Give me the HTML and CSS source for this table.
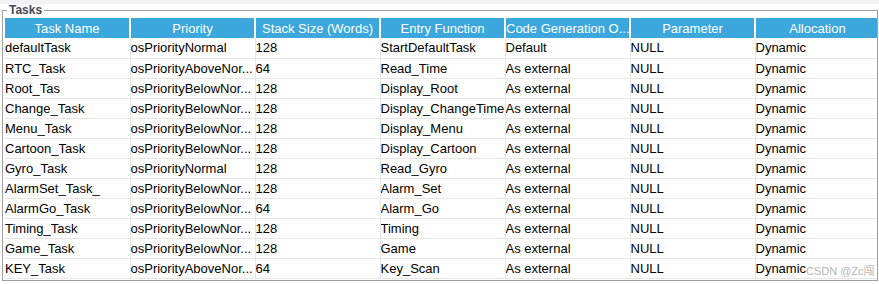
FILE: index.html
```html
<!DOCTYPE html>
<html lang="en">
<head>
    <meta charset="UTF-8">
    <title>Tasks</title>
    <link rel="stylesheet" href="styles.css">
</head>
<body>
    <div class="topbar"></div>
    <fieldset class="tasks">
        <legend>Tasks</legend>
        <div class="grid-wrap">
            <table class="grid">
                <thead>
                    <tr>
                        <th>Task Name</th>
                        <th>Priority</th>
                        <th>Stack Size (Words)</th>
                        <th>Entry Function</th>
                        <th class="left">Code Generation O...</th>
                        <th>Parameter</th>
                        <th>Allocation</th>
                    </tr>
                </thead>
                <tbody>
                    <tr><td>defaultTask</td><td>osPriorityNormal</td><td>128</td><td>StartDefaultTask</td><td>Default</td><td>NULL</td><td>Dynamic</td></tr>
                    <tr><td>RTC_Task</td><td>osPriorityAboveNor...</td><td>64</td><td>Read_Time</td><td>As external</td><td>NULL</td><td>Dynamic</td></tr>
                    <tr><td>Root_Tas</td><td>osPriorityBelowNor...</td><td>128</td><td>Display_Root</td><td>As external</td><td>NULL</td><td>Dynamic</td></tr>
                    <tr><td>Change_Task</td><td>osPriorityBelowNor...</td><td>128</td><td>Display_ChangeTime</td><td>As external</td><td>NULL</td><td>Dynamic</td></tr>
                    <tr><td>Menu_Task</td><td>osPriorityBelowNor...</td><td>128</td><td>Display_Menu</td><td>As external</td><td>NULL</td><td>Dynamic</td></tr>
                    <tr><td>Cartoon_Task</td><td>osPriorityBelowNor...</td><td>128</td><td>Display_Cartoon</td><td>As external</td><td>NULL</td><td>Dynamic</td></tr>
                    <tr><td>Gyro_Task</td><td>osPriorityNormal</td><td>128</td><td>Read_Gyro</td><td>As external</td><td>NULL</td><td>Dynamic</td></tr>
                    <tr><td>AlarmSet_Task_</td><td>osPriorityBelowNor...</td><td>128</td><td>Alarm_Set</td><td>As external</td><td>NULL</td><td>Dynamic</td></tr>
                    <tr><td>AlarmGo_Task</td><td>osPriorityBelowNor...</td><td>64</td><td>Alarm_Go</td><td>As external</td><td>NULL</td><td>Dynamic</td></tr>
                    <tr><td>Timing_Task</td><td>osPriorityBelowNor...</td><td>128</td><td>Timing</td><td>As external</td><td>NULL</td><td>Dynamic</td></tr>
                    <tr><td>Game_Task</td><td>osPriorityBelowNor...</td><td>128</td><td>Game</td><td>As external</td><td>NULL</td><td>Dynamic</td></tr>
                    <tr><td>KEY_Task</td><td>osPriorityAboveNor...</td><td>64</td><td>Key_Scan</td><td>As external</td><td>NULL</td><td>Dynamic</td></tr>
                </tbody>
            </table>
        </div>
    </fieldset>
    <div class="watermark">CSDN @Zc闯</div>
</body>
</html>
```

FILE: styles.css
```css
body {
    margin: 0;
    background: #fff;
    font-family: "Liberation Sans", Arial, "Noto Sans CJK SC", sans-serif;
    font-size: 13px;
    color: #000;
    position: relative;
    width: 879px;
    height: 284px;
    overflow: hidden;
}

.topbar {
    height: 4px;
    background: #f2f2f4;
}

.tasks {
    margin: 0 1px 0 2px;
    padding: 2px 0 1px 2px;
    border: 1px solid #a0a0a0;
    min-width: 0;
}

.tasks legend {
    font-size: 12px;
    font-weight: bold;
    color: #44445a;
    padding: 0 2px;
    margin-left: 2px;
    line-height: 12px;
}

.grid-wrap {
    overflow: hidden;
}

.grid {
    table-layout: fixed;
    width: 875px;
    border-collapse: collapse;
}

.grid th,
.grid td {
    width: 125px;
    padding: 0;
    white-space: nowrap;
    overflow: hidden;
    box-sizing: border-box;
}

.grid th {
    height: 20px;
    background: #3ba7dc;
    color: #fff;
    font-weight: normal;
    text-align: center;
    border-right: 2px solid #fff;
}

.grid th.left {
    text-align: left;
}

.grid td {
    height: 20px;
    text-align: left;
    border-right: 1px solid #e6e6e6;
    border-bottom: 1px solid #e6e6e6;
}

.watermark {
    position: absolute;
    left: 806px;
    top: 262px;
    font-size: 11px;
    color: #b4b4b4;
}
```
